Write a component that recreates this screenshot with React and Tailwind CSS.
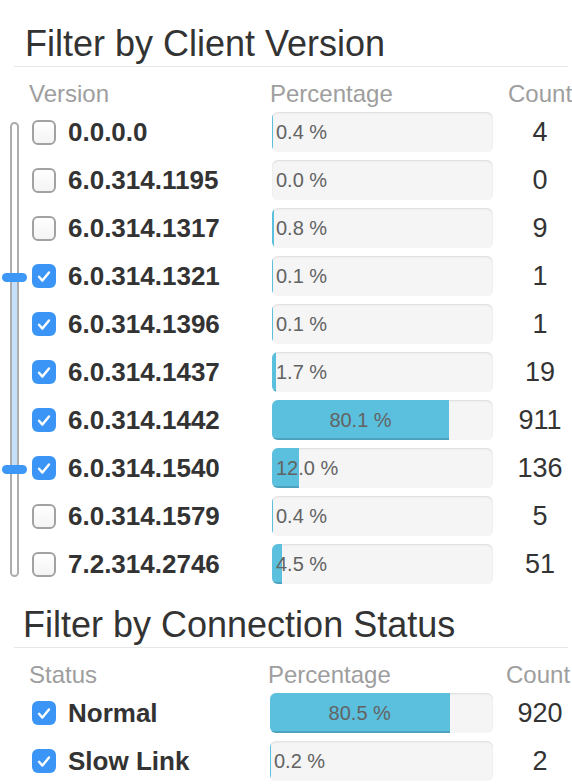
import * as React from "react";

const versions = [
  { name: "0.0.0.0", pct: 0.4, count: 4, checked: false },
  { name: "6.0.314.1195", pct: 0.0, count: 0, checked: false },
  { name: "6.0.314.1317", pct: 0.8, count: 9, checked: false },
  { name: "6.0.314.1321", pct: 0.1, count: 1, checked: true },
  { name: "6.0.314.1396", pct: 0.1, count: 1, checked: true },
  { name: "6.0.314.1437", pct: 1.7, count: 19, checked: true },
  { name: "6.0.314.1442", pct: 80.1, count: 911, checked: true },
  { name: "6.0.314.1540", pct: 12.0, count: 136, checked: true },
  { name: "6.0.314.1579", pct: 0.4, count: 5, checked: false },
  { name: "7.2.314.2746", pct: 4.5, count: 51, checked: false },
];

const statuses = [
  { name: "Normal", pct: 80.5, count: 920, checked: true },
  { name: "Slow Link", pct: 0.2, count: 2, checked: true },
];

// slider handles sit on these row indexes
const rangeFrom = 3;
const rangeTo = 7;

function Checkbox({ checked }) {
  if (checked) {
    return (
      <div className="flex h-[24px] w-[24px] shrink-0 items-center justify-center rounded-[6px] bg-[#3b95f6]">
        <svg width="24" height="24" viewBox="0 0 24 24" fill="none">
          <path
            d="M7 12.8 L10.4 16.6 L17 8.4"
            stroke="#fff"
            strokeWidth="2.4"
            strokeLinecap="round"
            strokeLinejoin="round"
          />
        </svg>
      </div>
    );
  }
  return (
    <div className="h-[25px] w-[24px] shrink-0 rounded-[6px] border-2 border-[#a2a2a2] bg-gradient-to-b from-white to-[#f4f4f4]" />
  );
}

function Bar({ pct, wide }) {
  const label = pct.toFixed(1) + " %";
  return (
    <div
      className={`relative h-[40px] shrink-0 overflow-hidden rounded-[6px] bg-[#f5f5f5] shadow-[inset_0_1px_2px_rgba(0,0,0,0.1)] ${
        wide ? "w-[223px]" : "w-[221px]"
      }`}
    >
      <div
        className="h-full bg-[#5bc0de] shadow-[inset_0_-2px_0_rgba(0,0,0,0.15)]"
        style={{ width: pct + "%" }}
      />
      {pct >= 50 ? (
        <div
          className="absolute left-0 top-0 flex h-full items-center justify-center text-[20px] leading-none text-[#636363]"
          style={{ width: pct + "%" }}
        >
          {label}
        </div>
      ) : (
        <div className="absolute left-[4px] top-0 flex h-full items-center text-[20px] leading-none text-[#636363]">
          {label}
        </div>
      )}
    </div>
  );
}

function Row({ item, wide }) {
  return (
    <div className="flex h-[48px] items-center">
      <Checkbox checked={item.checked} />
      <div
        className={`ml-[12px] text-[26px] font-bold leading-none text-[#333] ${
          wide ? "w-[202px]" : "w-[204px]"
        }`}
      >
        {item.name}
      </div>
      <Bar pct={item.pct} wide={wide} />
      <div className="ml-[15px] w-[64px] text-center text-[27px] leading-none text-[#333]">
        {item.count}
      </div>
    </div>
  );
}

function Title({ children, pad }) {
  return (
    <div
      className={`ml-[14px] mr-[4px] flex h-[46px] items-center border-b border-[#e6e6e6] text-[36px] leading-none text-[#333] ${pad}`}
    >
      {children}
    </div>
  );
}

function Header({ first, firstWidth }) {
  return (
    <div className="mt-[13px] flex h-[28px] items-center pl-[29px] text-[24px] leading-none text-[#9e9e9e]">
      <div className={firstWidth}>{first}</div>
      <div className="w-[238px]">Percentage</div>
      <div className="w-[64px] text-center">Count</div>
    </div>
  );
}

function RangeSlider() {
  const top = rangeFrom * 48 + 9;
  const bottom = rangeTo * 48 + 9;
  return (
    <div className="flex w-[32px] shrink-0 flex-col pb-[11px] pt-[14px]">
      <div className="relative ml-[10px] w-[9px] flex-1 rounded-full border-2 border-[#adadad] bg-white">
        <div
          className="absolute left-0 right-0 bg-[#c6dffa]"
          style={{ top: top, height: bottom - top }}
        />
        <div
          className="absolute left-[-10px] h-[9px] w-[25px] rounded-full bg-[#3d97f6]"
          style={{ top: top - 4.5 }}
        />
        <div
          className="absolute left-[-10px] h-[9px] w-[25px] rounded-full bg-[#3d97f6]"
          style={{ top: bottom - 4.5 }}
        />
      </div>
    </div>
  );
}

export default function App() {
  return (
    <div className="w-[572px] bg-white pt-[21px] font-['Liberation_Sans',Arial,sans-serif]">
      {/* Client version */}
      <Title pad="pl-[11px]">Filter by Client Version</Title>
      <Header first="Version" firstWidth="w-[241px]" />
      <div className="flex">
        <RangeSlider />
        <div className="flex flex-col">
          {versions.map((v) => (
            <Row key={v.name} item={v} />
          ))}
        </div>
      </div>

      {/* Connection status */}
      <div className="mt-[14px]">
        <Title pad="pl-[9px]">Filter by Connection Status</Title>
        <Header first="Status" firstWidth="w-[239px]" />
        <div className="flex flex-col pl-[32px]">
          {statuses.map((s) => (
            <Row key={s.name} item={s} wide />
          ))}
        </div>
      </div>
    </div>
  );
}
